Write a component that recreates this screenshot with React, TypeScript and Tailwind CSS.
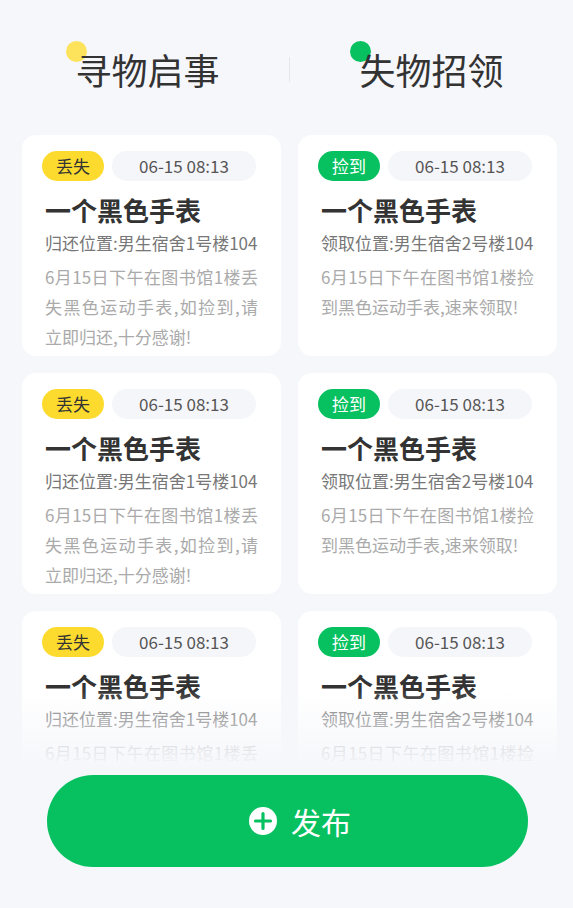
import React from 'react';

interface Notice {
  kind: 'lost' | 'found';
  time: string;
  title: string;
  place: string;
  desc: string;
}

const LOST: Notice = {
  kind: 'lost',
  time: '06-15 08:13',
  title: '一个黑色手表',
  place: '归还位置:男生宿舍1号楼104',
  desc: '6月15日下午在图书馆1楼丢失黑色运动手表,如捡到,请立即归还,十分感谢!',
};

const FOUND: Notice = {
  kind: 'found',
  time: '06-15 08:13',
  title: '一个黑色手表',
  place: '领取位置:男生宿舍2号楼104',
  desc: '6月15日下午在图书馆1楼捡到黑色运动手表,速来领取!',
};

const NOTICES: Notice[] = [LOST, FOUND, LOST, FOUND, LOST, FOUND];

function NoticeCard({ item }: { item: Notice }) {
  const lost = item.kind === 'lost';
  return (
    <div className="h-[221px] rounded-[14px] bg-white pl-5 pt-4">
      <div className="flex items-center gap-2">
        <span
          className={`flex h-[30px] w-[62px] items-center justify-center rounded-full text-[17px] ${
            lost ? 'bg-[#fddb2e] text-[#333]' : 'bg-[#07c160] text-white'
          }`}
        >
          {lost ? '丢失' : '捡到'}
        </span>
        <span className="flex h-[30px] w-[144px] items-center justify-center rounded-full bg-[#f5f6fa] text-[17px] text-[#555]">
          {item.time}
        </span>
      </div>
      <div className="ml-[3px] w-[213px]">
        <h3 className="mt-3 text-[26px] font-bold leading-[34px] text-[#333]">{item.title}</h3>
        <p className="mt-[3px] whitespace-nowrap text-[17px] leading-[26px] text-[#777]">{item.place}</p>
        <p className="mt-[6px] text-justify text-[17px] leading-[30px] text-[#aaa]">{item.desc}</p>
      </div>
    </div>
  );
}

function TabTitle({ label, dot }: { label: string; dot: string }) {
  return (
    <div className="relative">
      <span className={`absolute -left-[9px] -top-[7px] h-[21px] w-[21px] rounded-full ${dot}`} />
      <span className="relative text-[36px] leading-[43px] text-[#333]">{label}</span>
    </div>
  );
}

export default function App() {
  return (
    <div
      className="flex h-[908px] flex-col overflow-hidden bg-[#f6f7fb]"
      style={{ fontFamily: '"Noto Sans CJK SC", "Noto Sans", sans-serif' }}
    >
      <header className="flex h-[135px] items-start pt-[48px]">
        <div className="flex flex-1 justify-center pl-[6px]">
          <TabTitle label="寻物启事" dot="bg-[#fde35c]" />
        </div>
        <div className="mt-[9px] h-[25px] w-px bg-[#e6e7eb]" />
        <div className="flex flex-1 justify-center">
          <TabTitle label="失物招领" dot="bg-[#07c160]" />
        </div>
      </header>

      <div className="relative h-[632px] overflow-hidden">
        <div className="grid grid-cols-[259px_259px] gap-[17px] pl-[22px]">
          {NOTICES.map((n, i) => (
            <NoticeCard key={i} item={n} />
          ))}
        </div>
        <div className="pointer-events-none absolute inset-x-0 bottom-0 h-[77px] bg-gradient-to-b from-[#f6f7fb]/0 to-[#f6f7fb]" />
      </div>

      <div className="pl-[47px] pr-[45px] pt-[8px]">
        <button className="flex h-[92px] w-full items-center justify-center rounded-full bg-[#07c160] text-white">
          <span className="ml-[25px] flex items-center gap-[14px]">
            <svg width="28" height="28" viewBox="0 0 28 28">
              <circle cx="14" cy="14" r="14" fill="#fff" />
              <path d="M14 6.5v15M6.5 14h15" stroke="#07c160" strokeWidth="3.2" strokeLinecap="round" />
            </svg>
            <span className="text-[30px] leading-none">发布</span>
          </span>
        </button>
      </div>
    </div>
  );
}
